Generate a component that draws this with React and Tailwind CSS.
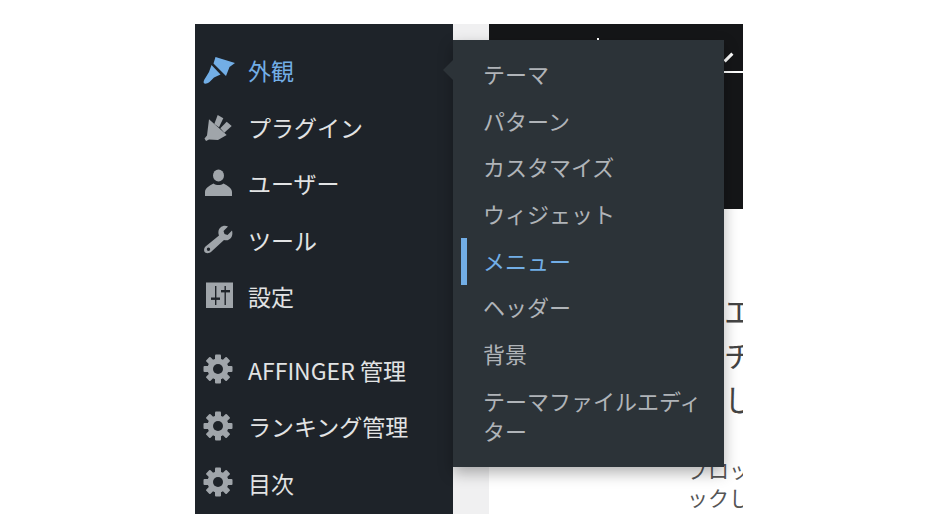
import React from 'react';

const Brush = () => (
  <svg viewBox="0 0 32 32" className="w-8 h-8 fill-current">
    <path d="M12.5 2 L32 8 L26.5 12 L23 21 L10.5 8.5 Z" />
    <path d="M8.5 10 L17.5 19.5 L11 22.5 L6.5 27 C4 29 1.5 29 0.8 28 C0.2 26.8 1 25 2.5 22.8 L6 17 Z" />
  </svg>
);

const Plug = () => (
  <svg viewBox="0 0 32 32" className="w-8 h-8 fill-current">
    <path d="M14.7 4 L20.3 7.3 L16 16.3 L11.3 13 Z" />
    <path d="M23.7 10.7 L28.7 15 L21.3 21.7 L17.3 17.3 Z" />
    <path d="M6 8.3 L23.7 24 L15 29 L6 28.5 L3 30 L1.5 27.5 L4 24.5 Z" />
  </svg>
);

const User = () => (
  <svg viewBox="0 0 32 32" className="w-8 h-8 fill-current">
    <ellipse cx="15.5" cy="7.5" rx="5.5" ry="6" />
    <path d="M2 28 L2 24 C2 20 7 17.5 10.5 15.5 C13.5 17.5 17.5 17.5 20.5 15.5 C24 17.5 29 20 29 24 L29 28 Z" />
  </svg>
);

const Wrench = () => (
  <svg viewBox="0 0 32 32" className="w-8 h-8 fill-current">
    <path fillRule="evenodd" d="M29 6.5 L24.5 11 L21.5 10 L20.5 7 L25 2.5 C20.5 0.5 16.5 3 15.5 7 C15.2 9 15.5 10 16 11.5 L2.5 22.5 C0.5 24.5 0.8 27.8 2.6 28.8 C4.5 29.8 7 29 8.5 27.5 L21 16 C22.5 16.5 24.5 16.5 26 15.5 C29 14 30 10 29 6.5 Z M5.5 23.5 A1.7 1.7 0 1 0 5.5 26.9 A1.7 1.7 0 1 0 5.5 23.5 Z" />
  </svg>
);

const Sliders = () => (
  <svg viewBox="0 0 32 32" className="w-8 h-8">
    <rect x="3" y="1.5" width="27" height="25.5" fill="currentColor" />
    <g fill="#1e2329">
      <rect x="12" y="5" width="1.4" height="19" />
      <rect x="8" y="16.5" width="9" height="2.4" />
      <rect x="21.5" y="5" width="1.4" height="19" />
      <rect x="18" y="9" width="9" height="2.4" />
    </g>
  </svg>
);

const Gear = () => (
  <svg viewBox="0 0 32 32" className="w-8 h-8 fill-current">
    <circle cx="15" cy="15" r="10.5" />
    {[0, 45, 90, 135].map((deg) => (
      <rect key={deg} x="12" y="0.5" width="6" height="29" rx="1" transform={`rotate(${deg} 15 15)`} />
    ))}
    <circle cx="15" cy="15" r="5" fill="#1e2329" />
  </svg>
);

const mainItems = [
  { label: '外観', icon: Brush, active: true },
  { label: 'プラグイン', icon: Plug },
  { label: 'ユーザー', icon: User },
  { label: 'ツール', icon: Wrench },
  { label: '設定', icon: Sliders },
];

const extraItems = [
  { label: 'AFFINGER 管理', icon: Gear },
  { label: 'ランキング管理', icon: Gear },
  { label: '目次', icon: Gear },
];

const subItems = ['テーマ', 'パターン', 'カスタマイズ', 'ウィジェット', 'メニュー', 'ヘッダー', '背景', 'テーマファイルエディター'];

const MenuRow = ({ item }) => {
  const Icon = item.icon;
  return (
    <li className={`flex items-center h-[56.5px] pl-2 gap-[13px] ${item.active ? 'text-[#72aee6]' : 'text-[#e2e3e4]'}`}>
      <span className={`shrink-0 ${item.active ? 'text-[#72aee6]' : 'text-[#a0a5aa]'}`}>
        <Icon />
      </span>
      <span className="whitespace-nowrap">{item.label}</span>
    </li>
  );
};

const App = () => {
  return (
    <div className="min-h-[526px] bg-white pl-[195px] pt-6 font-['Noto_Sans_CJK_JP','Noto_Sans',sans-serif]">
      <div className="relative flex w-[548px] h-[490px] overflow-hidden">
        {/* Sidebar */}
        <div className="w-[258px] shrink-0 bg-[#1e2329] pt-[18.5px] text-[23px] leading-none">
          <ul>
            {mainItems.map((item) => <MenuRow key={item.label} item={item} />)}
          </ul>
          <ul className="mt-[17px]">
            {extraItems.map((item) => <MenuRow key={item.label} item={item} />)}
          </ul>
        </div>

        {/* Strip between the sidebar and the content */}
        <div className="w-9 shrink-0 bg-[#f0f0f1]" />

        {/* Page content behind the flyout */}
        <div className="flex-1 min-w-0 flex flex-col bg-white">
          <div className="h-[185px] bg-[#151618] pt-[47px]">
            <div className="h-[2px] bg-white" />
          </div>
          <div className="pl-[235px] pt-[79px] text-[#444] text-[30px] leading-[44px] whitespace-nowrap">
            <p>エ</p>
            <p>チ</p>
            <p>し</p>
          </div>
          <div className="pl-[198px] pt-[35px] text-[#555] text-[21px] leading-[28px] whitespace-nowrap">
            <p>ブロック</p>
            <p>ックし</p>
          </div>
        </div>

        {/* Bits of the header text that stick out past the flyout */}
        <span className="absolute left-[532px] top-[28px] w-[3px] h-[11px] rotate-45 bg-white" />
        <span className="absolute left-[402px] top-[14px] w-[2px] h-[2px] bg-white" />

        {/* Flyout */}
        <div className="absolute left-[258px] top-4 w-[271px] h-[427px] bg-[#2c3338] pt-[18px] pl-[30px] pr-4 text-[22px] leading-[30px] text-[#b0b4b8] shadow-[0_6px_14px_rgba(0,0,0,0.3)]">
          <span className="absolute left-[-10px] top-[20px] border-y-[10px] border-r-[10px] border-y-transparent border-r-[#2c3338]" />
          <span className="absolute left-[8px] top-[198px] w-[6px] h-[47px] bg-[#72aee6]" />
          <ul className="flex flex-col gap-[16.7px]">
            {subItems.map((label) => (
              <li key={label} className={label === 'メニュー' ? 'text-[#72aee6]' : ''}>{label}</li>
            ))}
          </ul>
        </div>
      </div>
    </div>
  );
};

export default App;
